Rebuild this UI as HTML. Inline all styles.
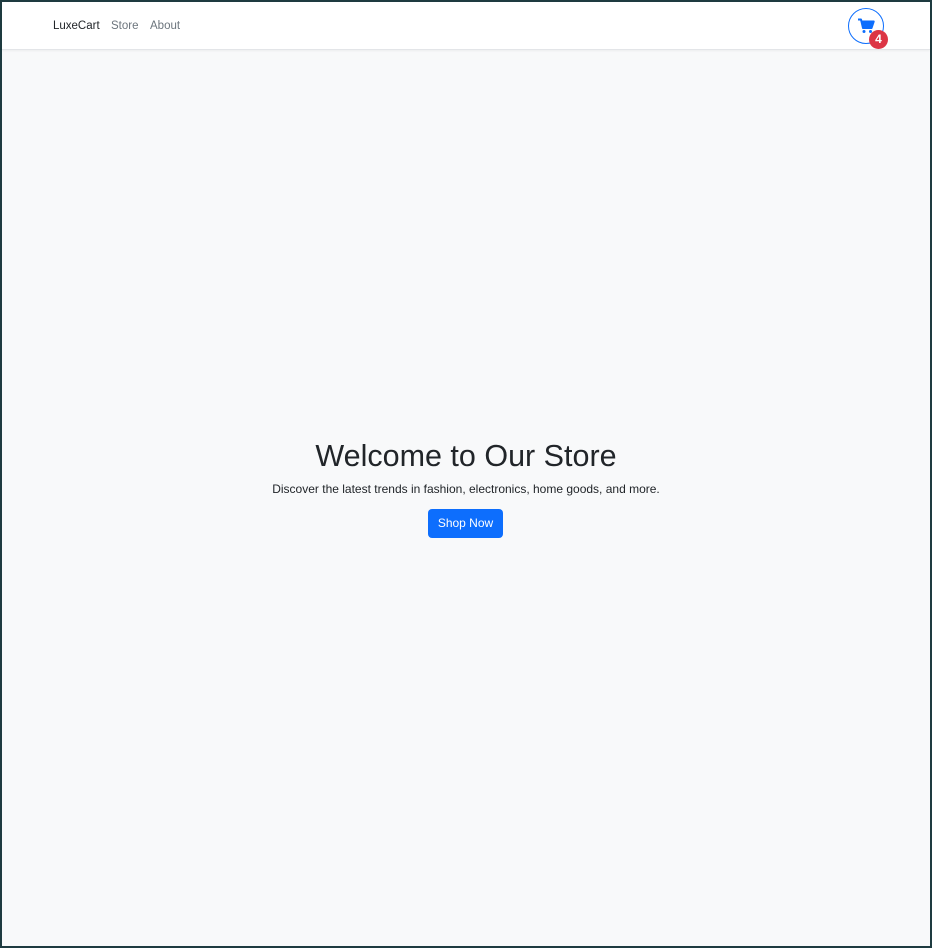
<!DOCTYPE html>
<html><head><style>
*{box-sizing:border-box;margin:0;padding:0}
html,body{width:932px;height:948px;overflow:hidden}
body{background:#1e3b40;font-family:"Liberation Sans",sans-serif;position:relative}
.page{position:absolute;left:2px;top:2px;width:928px;height:944px;background:#f8f9fa}
.nav{position:absolute;left:0;top:0;width:928px;height:48px;background:#fff;border-bottom:1px solid #e3e5e8;box-shadow:0 1px 2px rgba(0,0,0,.05)}
.nav span{position:absolute;top:18px;font-size:11.5px;color:#6c757d}
.cart{position:absolute;left:846px;top:6px;width:36px;height:36px;border:1px solid #0d6efd;border-radius:50%}
.badge{position:absolute;left:867px;top:28px;width:19px;height:19px;border-radius:50%;background:#dc3545;color:#fff;font-size:12px;font-weight:bold;text-align:center;line-height:19px}
h1{position:absolute;left:0;width:928px;top:437px;text-align:center;font-size:30.5px;font-weight:normal;color:#212529}
p{position:absolute;left:0;width:928px;top:480px;text-align:center;font-size:12px;color:#212529}
.btn{position:absolute;left:426px;top:507px;width:75px;height:29px;background:#0d6efd;border-radius:4px;color:#fff;font-size:12px;text-align:center;line-height:29px}
</style></head><body>
<div class="page">
<div class="nav">
<span style="left:51px;color:#212529">LuxeCart</span>
<span style="left:109px">Store</span>
<span style="left:148px">About</span>
<div class="cart"><svg width="36" height="36" viewBox="0 0 36 36" style="position:absolute;left:-1px;top:-1px"><path d="M10 11.5h3l2 8.5h8.5l2.2-6.5H14" fill="#0d6efd" stroke="#0d6efd" stroke-width="2" stroke-linejoin="round"/><circle cx="16" cy="23.5" r="1.5" fill="#0d6efd"/><circle cx="22.5" cy="23.5" r="1.5" fill="#0d6efd"/></svg></div>
<div class="badge">4</div>
</div>
<h1>Welcome to Our Store</h1>
<p>Discover the latest trends in fashion, electronics, home goods, and more.</p>
<div class="btn">Shop Now</div>
</div>
</body></html>
